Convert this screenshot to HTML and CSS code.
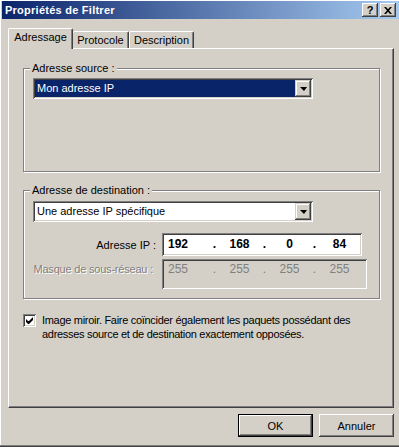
FILE: index.html
```html
<!doctype html>
<html lang="fr">
<head>
<meta charset="utf-8" />
<title>Propriétés de Filtrer</title>
<link rel="stylesheet" href="styles.css">
</head>
<body>

<div class="window">

<div class="titlebar">
	<span class="title">Propriétés de Filtrer</span>
	<span class="capbtn">?</span>
	<span class="capbtn"><svg width="8" height="7" viewBox="0 0 8 7"><path d="M0 0h2l2 2.3 2-2.3h2l-3 3.5 3 3.5h-2l-2-2.3-2 2.3h-2l3-3.5z" fill="#000"/></svg></span>
</div>

<div class="content">

	<div class="tabs">
		<div class="tab tab-on tab-adr">Adressage</div>
		<div class="tab tab-pro">Protocole</div>
		<div class="tab tab-des">Description</div>
	</div>

	<div class="panel">

		<fieldset class="group group-src">
			<legend>Adresse source :</legend>
			<div class="combo">
				<div class="combo-text sel">Mon adresse IP</div>
				<div class="combo-btn"><span class="arrow"></span></div>
			</div>
		</fieldset>

		<fieldset class="group group-dst">
			<legend>Adresse de destination :</legend>
			<div class="combo">
				<div class="combo-text">Une adresse IP spécifique</div>
				<div class="combo-btn"><span class="arrow"></span></div>
			</div>

			<div class="iprow">
				<span class="iplabel">Adresse IP :</span>
				<div class="ipfield">
					<span class="oct first">192</span><span class="oct">.</span><span class="oct">168</span><span class="oct">.</span><span class="oct">0</span><span class="oct">.</span><span class="oct">84</span>
				</div>
			</div>

			<div class="iprow mask">
				<span class="iplabel">Masque de sous-réseau :</span>
				<div class="ipfield">
					<span class="oct first">255</span><span class="oct">.</span><span class="oct">255</span><span class="oct">.</span><span class="oct">255</span><span class="oct">.</span><span class="oct">255</span>
				</div>
			</div>
		</fieldset>

		<div class="check">
			<span class="checkbox"><svg width="7" height="7" viewBox="0 0 7 7"><path d="M0 2v3l2 2h1l4-4v-3l-4 4h-1z" fill="#000"/></svg></span>
			<span class="check-text">Image miroir. Faire coïncider également les paquets possédant des<br>adresses source et de destination exactement opposées.</span>
		</div>

	</div>

	<div class="buttons">
		<div class="btn btn-default"><span>OK</span></div>
		<div class="btn"><span>Annuler</span></div>
	</div>

</div>

</div>

</body>
</html>
```

FILE: styles.css
```css
body{margin:0;font-family:"Liberation Sans",Arial,sans-serif;font-size:11px;color:#000;background:#d4d0c8}

.window{width:399px;height:447px;box-sizing:border-box;background:#d4d0c8;padding:1px 0 2px 2px;
	box-shadow:inset 0 -1px 0 #404040,inset 0 -2px 0 #808080,inset 1px 1px 0 #fff}

/* title bar */
.titlebar{height:18px;display:flex;align-items:center;padding:0 3px 0 3px;
	background:linear-gradient(to right,#0a246a,#a6caf0);color:#fff}
.title{flex:1;font-weight:bold;font-size:11px;letter-spacing:0.25px}
.capbtn{width:16px;height:14px;box-sizing:border-box;margin-left:1px;background:#d4d0c8;color:#000;
	display:flex;align-items:center;justify-content:center;font-weight:bold;font-size:11px;
	box-shadow:inset -1px -1px 0 #404040,inset 1px 1px 0 #fff,inset -2px -2px 0 #808080}
.capbtn + .capbtn{margin-left:2px}

.content{padding:9px 5px 0 6px}

/* tabs */
.tabs{display:flex;align-items:flex-end;height:20px}
.tab{height:17px;box-sizing:border-box;text-align:center;line-height:13px;padding-top:2px;
	border-top:1px solid #fff;border-left:1px solid #fff;border-right:1px solid #404040;
	box-shadow:inset -1px 0 0 #808080;border-radius:2px 2px 0 0}
.tab-on{height:21px;margin-bottom:-1px;position:relative;z-index:1;background:#d4d0c8;padding-top:2px}
.tab-adr{width:65px}
.tab-pro{width:56px;border-left:none}
.tab-des{width:65px}

/* panel */
.panel{height:360px;box-sizing:border-box;border-top:1px solid #fff;border-left:1px solid #fff;
	border-right:1px solid #404040;border-bottom:1px solid #404040;box-shadow:inset -1px -1px 0 #808080;
	padding:13px 13px 0 14px}

/* group boxes */
.group{margin:0;min-width:0;box-sizing:border-box;border:1px solid #808080;padding:0 9px;
	box-shadow:inset 1px 1px 0 #fff,1px 1px 0 #fff}
.group legend{line-height:13px;padding:0 2px;margin-left:-3px;background:#d4d0c8}
.group-src{height:110px;padding-top:3px}
.group-dst{height:115px;margin-top:12px;padding-top:4px}

/* combo */
.combo{width:280px;height:21px;box-sizing:border-box;display:flex;background:#fff;padding:2px;
	box-shadow:inset 1px 1px 0 #808080,inset -1px -1px 0 #fff,inset 2px 2px 0 #404040,inset -2px -2px 0 #d4d0c8}
.combo-text{flex:1;line-height:17px;padding-left:2px;white-space:nowrap}
.combo-text.sel{background:#0a246a;color:#fff}
.combo-btn{width:16px;display:flex;align-items:center;justify-content:center;background:#d4d0c8;
	box-shadow:inset -1px -1px 0 #404040,inset 1px 1px 0 #d4d0c8,inset -2px -2px 0 #808080,inset 2px 2px 0 #fff}
.arrow{width:0;height:0;border-left:4px solid transparent;border-right:3px solid transparent;border-top:4px solid #000;margin-top:1px}

/* ip rows */
.iprow{display:flex;align-items:center;margin-top:11px}
.iplabel{width:123px;text-align:right;margin-right:6px;white-space:nowrap}
.ipfield{width:200px;height:23px;box-sizing:border-box;display:flex;align-items:center;background:#fff;padding:2px;
	font-size:12px;font-weight:bold;line-height:19px;
	box-shadow:inset 1px 1px 0 #808080,inset -1px -1px 0 #fff,inset 2px 2px 0 #404040,inset -2px -2px 0 #d4d0c8}
.oct{width:25px;text-align:center}
.oct.first{width:28px;margin-right:10px}

.iprow.mask{margin-top:3px;align-items:flex-start}
.mask .iplabel{color:#808080;text-shadow:1px 1px 0 #fff;margin-top:3px;line-height:14px;width:120px;margin-right:9px;letter-spacing:-0.2px}
.mask .ipfield{width:205px;height:30px;background:#d4d0c8;color:#808080;font-weight:normal;align-items:flex-start;
	padding-top:3px;line-height:14px}

/* checkbox */
.check{display:flex;align-items:flex-start;margin-top:14px;line-height:13px}
.checkbox{width:13px;height:13px;box-sizing:border-box;margin-top:1px;margin-right:6px;background:#fff;
	display:flex;align-items:center;justify-content:center;flex:none;
	box-shadow:inset 1px 1px 0 #808080,inset -1px -1px 0 #fff,inset 2px 2px 0 #404040,inset -2px -2px 0 #d4d0c8}
.check-text{letter-spacing:-0.3px;line-height:14px}

/* buttons */
.buttons{display:flex;justify-content:flex-end;gap:6px;margin-top:6px}
.btn{width:75px;height:23px;box-sizing:border-box;display:flex;align-items:center;justify-content:center;
	box-shadow:inset -1px -1px 0 #404040,inset 1px 1px 0 #fff,inset -2px -2px 0 #808080}
.btn-default{border:1px solid #000;box-shadow:inset -1px -1px 0 #404040,inset 1px 1px 0 #fff,inset -2px -2px 0 #808080}
```
